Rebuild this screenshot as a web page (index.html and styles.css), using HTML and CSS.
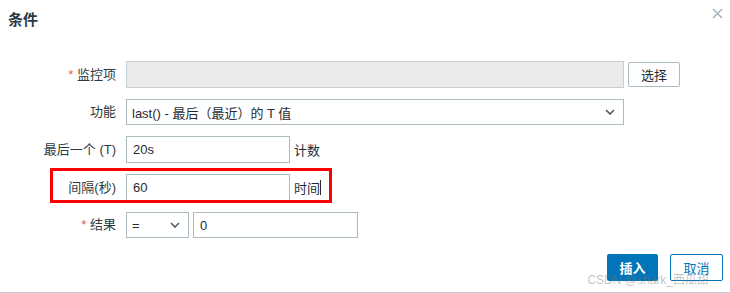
FILE: index.html
```html
<!DOCTYPE html>
<html lang="zh-CN">
<head>
    <meta charset="UTF-8">
    <title>条件</title>
    <link rel="stylesheet" href="styles.css">
</head>
<body>
    <div class="dialog">
        <div class="dialog-head">
            <h4 class="dialog-title">条件</h4>
            <svg class="close" width="11" height="11" viewBox="0 0 11 11"><path d="M1 1l9 9M10 1l-9 9" stroke="#a9b6bd" stroke-width="1.6"/></svg>
        </div>

        <div class="form">
            <div class="row">
                <label class="label"><span class="req">*</span> 监控项</label>
                <div class="field">
                    <input type="text" class="input input-wide" disabled>
                    <button class="btn-alt">选择</button>
                </div>
            </div>

            <div class="row">
                <label class="label">功能</label>
                <div class="field">
                    <div class="select select-wide">
                        <span>last() - 最后（最近）的 T 值</span>
                        <svg class="caret" width="10" height="6" viewBox="0 0 10 6"><path d="M1 1l4 4 4-4" fill="none" stroke="#4b5a62" stroke-width="1.6"/></svg>
                    </div>
                </div>
            </div>

            <div class="row">
                <label class="label">最后一个 (T)</label>
                <div class="field">
                    <input type="text" class="input input-mid" value="20s">
                    <span class="hint">计数</span>
                </div>
            </div>

            <div class="row marked">
                <label class="label">间隔(秒)</label>
                <div class="field">
                    <input type="text" class="input input-mid" value="60">
                    <span class="hint">时间<span class="cursor"></span></span>
                </div>
                <div class="redbox"></div>
            </div>

            <div class="row">
                <label class="label"><span class="req">*</span> 结果</label>
                <div class="field">
                    <div class="select select-small">
                        <span>=</span>
                        <svg class="caret" width="10" height="6" viewBox="0 0 10 6"><path d="M1 1l4 4 4-4" fill="none" stroke="#4b5a62" stroke-width="1.6"/></svg>
                    </div>
                    <input type="text" class="input input-value" value="0">
                </div>
            </div>
        </div>

        <div class="dialog-foot">
            <button class="btn-main">插入</button>
            <button class="btn-cancel">取消</button>
            <span class="watermark">CSDN @shark_西瓜甜</span>
        </div>
    </div>
</body>
</html>
```

FILE: styles.css
```css
body {
    margin: 0;
    background: #fff;
    font-family: "Liberation Sans", Arial, "Noto Sans CJK SC", sans-serif;
    font-size: 13px;
    color: #1f2c33;
}

.dialog {
    width: 730px;
    height: 292px;
    border-bottom: 1px solid #c4ccd1;
    position: relative;
}

.dialog-head {
    height: 40px;
    display: flex;
    justify-content: space-between;
    align-items: flex-start;
}

.dialog-title {
    margin: 0;
    padding: 10px 0 0 8px;
    font-size: 15px;
    font-weight: bold;
    line-height: 20px;
    color: #2b3a42;
}

.close {
    margin: 8px 7px 0 0;
}

.form {
    display: flex;
    flex-direction: column;
    gap: 11px;
    padding-top: 21px;
}

.row {
    display: flex;
    align-items: center;
    gap: 10px;
    position: relative;
}

.label {
    width: 116px;
    text-align: right;
    line-height: 26px;
    color: #2b3a42;
}

.req {
    color: #e45959;
}

.field {
    display: flex;
    align-items: center;
    gap: 4px;
}

.input {
    box-sizing: border-box;
    height: 27px;
    border: 1px solid #acbbc2;
    padding: 0 6px;
    font-family: inherit;
    font-size: 13px;
    color: #1f2c33;
    background: #fff;
    margin: 0;
}

.input:disabled {
    background: #ebebeb;
    border-color: #c5cfd4;
}

.input-wide {
    width: 498px;
}

.input-mid {
    width: 164px;
}

.input-value {
    width: 165px;
    height: 26px;
}

.btn-alt {
    height: 25px;
    width: 52px;
    background: #fff;
    border: 1px solid #acbbc2;
    border-radius: 2px;
    font-family: inherit;
    font-size: 13px;
    color: #1f2c33;
}

.select {
    box-sizing: border-box;
    height: 26px;
    border: 1px solid #acbbc2;
    padding: 0 8px 0 5px;
    display: flex;
    align-items: center;
    justify-content: space-between;
    background: #fff;
}

.select-wide {
    width: 498px;
}

.select-small {
    width: 63px;
}

.hint {
    display: inline-flex;
    align-items: center;
}

.cursor {
    display: inline-block;
    width: 1px;
    height: 15px;
    background: #1f2c33;
}

.redbox {
    position: absolute;
    left: 50px;
    top: -6px;
    width: 276px;
    height: 29px;
    border: 3px solid #f00;
}

.dialog-foot {
    position: absolute;
    right: 7px;
    bottom: 11px;
    display: flex;
    gap: 12px;
}

.btn-main {
    width: 51px;
    height: 27px;
    background: #0275b8;
    color: #fff;
    border: none;
    border-radius: 2px;
    font-family: inherit;
    font-size: 13px;
    font-weight: bold;
}

.btn-cancel {
    width: 53px;
    height: 27px;
    background: #fff;
    color: #0275b8;
    border: 1px solid #0275b8;
    border-radius: 2px;
    font-family: inherit;
    font-size: 13px;
}

.watermark {
    position: absolute;
    right: 14px;
    bottom: -6px;
    font-size: 12px;
    color: rgba(120, 120, 120, 0.45);
    white-space: nowrap;
    pointer-events: none;
}
```
